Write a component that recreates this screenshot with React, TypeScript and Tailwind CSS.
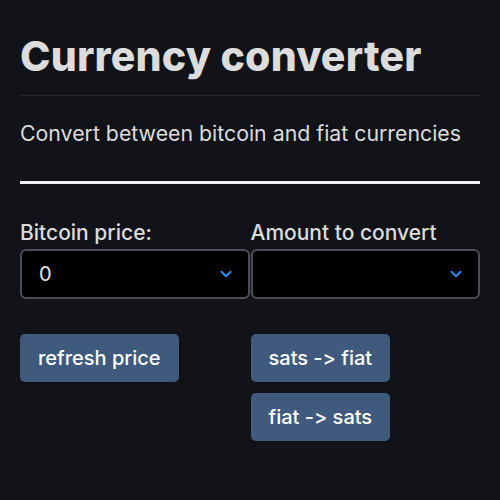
import { ChevronDown } from 'lucide-react'

function Select({ value }: { value: string }) {
  return (
    <div className="relative mt-[1px] flex h-[50px] items-center rounded-[6px] border-2 border-[#4a4f57] bg-black pl-[17px] text-[20px] text-[#e6e6e6]">
      <span>{value}</span>
      <ChevronDown className="absolute right-[13px] top-[14px] h-[18px] w-[18px] text-[#2f86f6]" strokeWidth={2.75} />
    </div>
  )
}

function Button({ label }: { label: string }) {
  return (
    <button className="h-[48px] rounded-[5px] bg-[#3f5a7d] px-[18px] text-[20px] font-medium text-white [font-feature-settings:'calt'_0,'liga'_0]">
      {label}
    </button>
  )
}

export default function App() {
  return (
    <div className="min-h-[500px] bg-[#111318] px-[20px] pt-[28px]" style={{ fontFamily: 'Inter, "Noto Sans", sans-serif' }}>
      <h1 className="text-[41px] font-extrabold leading-[56px] tracking-[0.2px] text-[#dcdcdc]">Currency converter</h1>
      <hr className="mt-[11px] border-t border-[#22262c]" />
      <p className="mt-[23px] text-[21.3px] leading-[28px] text-[#dcdcdc]">Convert between bitcoin and fiat currencies</p>
      <div className="mt-[34px] h-[3px] bg-[#f0f0f0]" />
      <div className="mt-[34px] grid grid-cols-2 gap-x-[1px]">
        <div>
          <div className="text-[21px] font-medium leading-[30px] text-[#dcdcdc]">Bitcoin price:</div>
          <Select value="0" />
        </div>
        <div>
          <div className="text-[21px] font-medium leading-[30px] text-[#dcdcdc]">Amount to convert</div>
          <Select value="" />
        </div>
        <div className="mt-[35px] flex flex-col items-start">
          <Button label="refresh price" />
        </div>
        <div className="mt-[35px] flex flex-col items-start gap-[11px]">
          <Button label="sats -> fiat" />
          <Button label="fiat -> sats" />
        </div>
      </div>
    </div>
  )
}
